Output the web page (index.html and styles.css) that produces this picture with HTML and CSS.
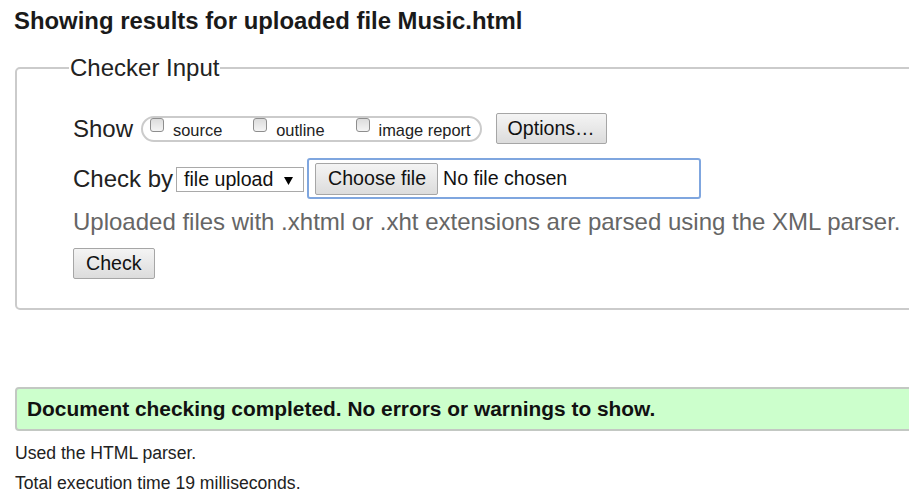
FILE: index.html
```html
<!DOCTYPE html>
<html lang="en">
<head>
<meta charset="utf-8">
<title>Showing results for Music.html - Nu Html Checker</title>
<link rel="stylesheet" href="styles.css">
</head>
<body>
<h2 class="title">Showing results for uploaded file Music.html</h2>
<form class="checker">
  <fieldset class="input-box">
    <legend class="input-legend">Checker Input</legend>
    <div class="row row-show">
      <span class="row-label">Show</span>
      <div class="show-group">
        <label class="opt"><input type="checkbox" class="cb"><span class="opt-text">source</span></label>
        <label class="opt"><input type="checkbox" class="cb"><span class="opt-text">outline</span></label>
        <label class="opt"><input type="checkbox" class="cb"><span class="opt-text">image report</span></label>
      </div>
      <button type="button" class="btn btn-options">Options…</button>
    </div>
    <div class="row row-check">
      <span class="row-label">Check by</span>
      <div class="select">file upload<svg class="select-arrow" width="9" height="8" viewBox="0 0 9 8"><path d="M0 0H9L4.5 8Z" fill="#000"/></svg></div>
      <div class="file-field">
        <span class="btn btn-file">Choose file</span>
        <span class="file-status">No file chosen</span>
      </div>
    </div>
    <p class="note">Uploaded files with .xhtml or .xht extensions are parsed using the XML parser.</p>
    <button type="button" class="btn btn-check">Check</button>
  </fieldset>
</form>
<p class="status">Document checking completed. No errors or warnings to show.</p>
<p class="meta meta-first">Used the HTML parser.</p>
<p class="meta">Total execution time 19 milliseconds.</p>
</body>
</html>
```
FILE: styles.css
```css
html {
  overflow: hidden;
}
body {
  margin: 0;
  padding: 7px 0 0 14px;
  font-family: "Liberation Sans", Arial, sans-serif;
  color: #222;
  background: #fff;
}
.title {
  margin: 0;
  font-size: 23.9px;
  line-height: 28px;
  font-weight: bold;
  color: #1a1a1a;
}
.checker {
  margin: 0;
}
.input-box {
  margin: 19px -60px 0 1px;
  min-width: 0;
  border: 2px solid #cbcbcb;
  border-radius: 5px;
  padding: 31px 0 29px 56px;
}
.input-legend {
  margin-left: -4px;
  padding: 0 1px;
  font-size: 24px;
  line-height: 28px;
  color: #222;
}
.row {
  display: flex;
  align-items: center;
}
.row-label {
  font-size: 24px;
  line-height: 28px;
  color: #222;
}
.row-show {
  height: 31px;
}
.show-group {
  display: flex;
  align-items: flex-start;
  gap: 31px;
  height: 22px;
  margin-left: 8px;
  padding: 0 9px 0 7px;
  border: 2px solid #cbcbcb;
  border-radius: 13px;
}
.opt {
  display: flex;
  align-items: flex-start;
}
.cb {
  appearance: none;
  -webkit-appearance: none;
  width: 14px;
  height: 14px;
  margin: 0 9px 0 0;
  border: 1px solid #8e8e8e;
  border-radius: 3px;
  background: linear-gradient(#dcdcdc, #f4f4f4);
}
.opt-text {
  font-size: 16.4px;
  line-height: 22px;
  padding-top: 1px;
  color: #222;
}
.btn {
  display: inline-flex;
  align-items: center;
  box-sizing: border-box;
  font-family: "Liberation Sans", Arial, sans-serif;
  font-size: 19.6px;
  color: #111;
  background: linear-gradient(#f4f4f4, #dcdcdc);
  border: 1px solid #a6a6a6;
  border-radius: 2px;
  margin: 0;
}
.btn-options {
  margin-left: 14px;
  height: 31px;
  padding: 0 11px;
}
.row-check {
  margin-top: 14px;
  height: 41px;
}
.select {
  display: flex;
  align-items: center;
  box-sizing: border-box;
  height: 25px;
  width: 128px;
  margin: 1px 0 0 3px;
  padding: 0 0 0 7px;
  border: 1px solid #a9a9a9;
  font-size: 19.6px;
  color: #111;
  background: #fff;
}
.select-arrow {
  margin: 3px 0 0 11px;
}
.file-field {
  display: flex;
  align-items: center;
  box-sizing: border-box;
  width: 394px;
  height: 41px;
  margin-left: 3px;
  padding-left: 6px;
  border: 2px solid #7fa6df;
  border-radius: 3px;
}
.btn-file {
  height: 32px;
  padding: 0 11px 0 12px;
}
.file-status {
  margin-left: 5px;
  font-size: 19.6px;
  color: #111;
}
.note {
  margin: 9px 0 0;
  font-size: 24px;
  line-height: 28px;
  color: #666;
  white-space: nowrap;
}
.btn-check {
  margin-top: 12px;
  height: 31px;
  padding: 0 12px;
}
.status {
  margin: 77px -60px 0 1px;
  padding: 8px 10px;
  border: 2px solid #c3c8c3;
  border-radius: 4px;
  background: #ccffcc;
  font-size: 20.9px;
  line-height: 24px;
  font-weight: bold;
  color: #111;
}
.meta {
  margin: 10px 0 0 1px;
  font-size: 17.6px;
  line-height: 20px;
  color: #222;
}
.meta-first {
  margin-top: 12px;
}
```
